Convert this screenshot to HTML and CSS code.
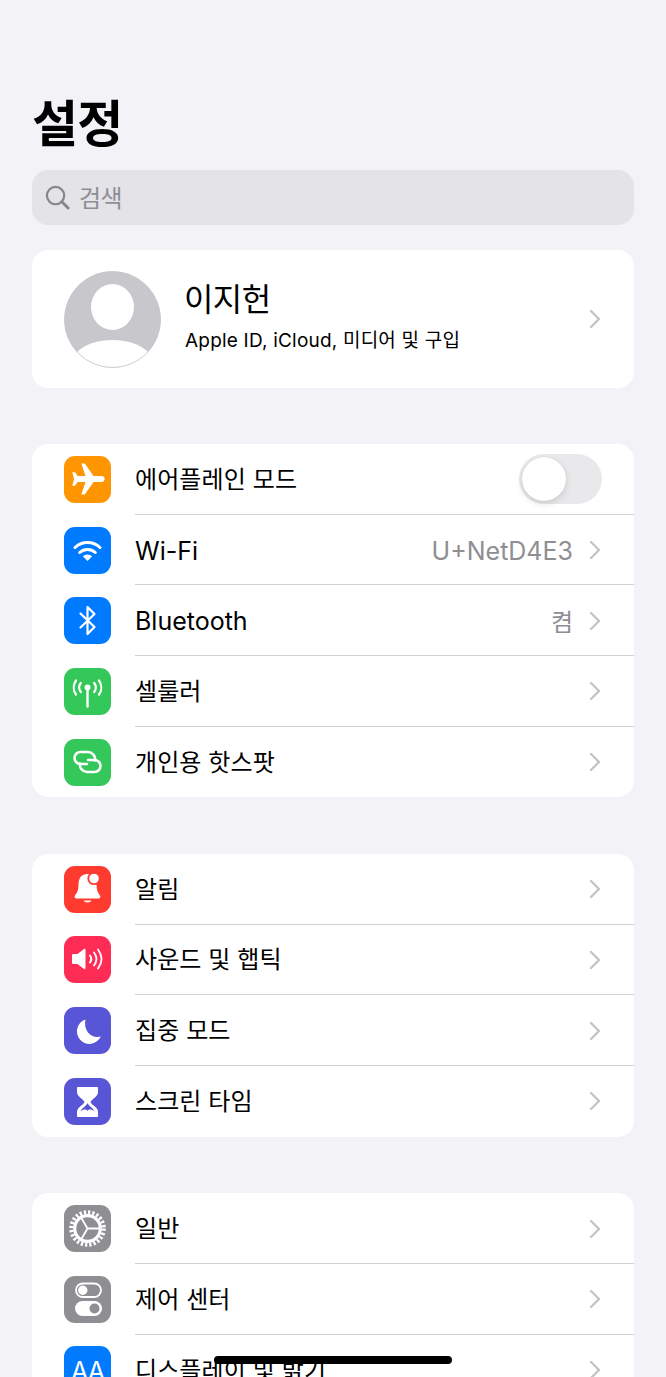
FILE: index.html
```html
<!DOCTYPE html>
<html lang="ko">
  <head>
    <meta charset="UTF-8" />
    <meta name="viewport" content="width=device-width, initial-scale=1.0" />
    <title>설정</title>
    <link rel="stylesheet" href="styles.css">
  </head>
  <body>
    <svg class="sprite" width="0" height="0">
      <symbol id="chev" viewBox="0 0 12 20">
        <path d="M2 2l8 8-8 8" fill="none" stroke="currentColor" stroke-width="2.4" stroke-linecap="round" stroke-linejoin="round" />
      </symbol>
    </svg>

    <h1 class="page-title">설정</h1>

    <div class="search">
      <svg class="search-icon" viewBox="0 0 26 26"><circle cx="11" cy="11" r="9" fill="none" stroke="currentColor" stroke-width="2.3" /><path d="M17.5 17.5l6.5 6.5" stroke="currentColor" stroke-width="3" stroke-linecap="round" /></svg>
      <span>검색</span>
    </div>

    <div class="card profile">
      <svg class="avatar" viewBox="0 0 97 97">
        <circle cx="48.5" cy="48.5" r="48.2" fill="#c7c7cc" />
        <ellipse cx="48.5" cy="36" rx="21.5" ry="23" fill="#fff" />
        <path d="M13 81c8-8 21-12 35.500-12s27.500 4 35.500 12c-9 10-22 15.500-35.500 15.500S22 91 13 81z" fill="#fff" />
        <circle cx="48.500" cy="48.500" r="48" fill="none" stroke="#c7c7cc" stroke-width="0.8" />
      </svg>
      <div class="profile-text">
        <div class="profile-name">이지헌</div>
        <div class="profile-sub">Apple ID, iCloud, 미디어 및 구입</div>
      </div>
      <svg class="chev"><use href="#chev" /></svg>
    </div>

    <div class="card group">
      <div class="row">
        <svg class="icon bg-orange" viewBox="0 0 47 47"><path fill="#fff" d="M37.500 20H29.500L20.800 7.500H17.300L21.500 20H13.700L10.900 16.300H8.300L10 23 8.300 29.700H10.900L13.700 26H21.500L17.300 38.500H20.800L29.500 26H37.500C41.800 26 41.800 20 37.500 20Z" /></svg>
        <div class="row-body">
          <span class="label">에어플레인 모드</span>
          <span class="toggle"><span class="knob"></span></span>
        </div>
      </div>
      <div class="row">
        <svg class="icon bg-blue" viewBox="0 0 47 47"><g fill="none" stroke="#fff" stroke-width="3" stroke-linecap="round"><path d="M11 20.500A18 18 0 0 1 36 20.500" /><path d="M15.700 25.500A11.500 11.500 0 0 1 31.300 25.500" /></g><path fill="#fff" d="M23.500 34L18.800 29.300A7 7 0 0 1 28.200 29.300Z" /></svg>
        <div class="row-body">
          <span class="label latin">Wi-Fi</span>
          <span class="value latin">U+NetD4E3</span>
          <svg class="chev"><use href="#chev" /></svg>
        </div>
      </div>
      <div class="row">
        <svg class="icon bg-blue" viewBox="0 0 47 47"><path fill="none" stroke="#fff" stroke-width="2.200" stroke-linejoin="round" stroke-linecap="round" d="M16.500 16.500L30.500 30 23.500 37V10L30.500 17 16.500 30.500" /></svg>
        <div class="row-body">
          <span class="label latin">Bluetooth</span>
          <span class="value">켬</span>
          <svg class="chev"><use href="#chev" /></svg>
        </div>
      </div>
      <div class="row">
        <svg class="icon bg-green" viewBox="0 0 47 47"><circle cx="23.500" cy="19.500" r="3" fill="#fff" /><path d="M23.500 20v18.500" stroke="#fff" stroke-width="2.400" stroke-linecap="round" /><g fill="none" stroke="#fff" stroke-width="2.200" stroke-linecap="round"><path d="M12 12.500A12 12 0 0 0 12 26.500" /><path d="M16.800 15A7.500 7.500 0 0 0 16.800 24" /><path d="M35 12.500A12 12 0 0 1 35 26.500" /><path d="M30.200 15A7.500 7.500 0 0 1 30.200 24" /></g></svg>
        <div class="row-body">
          <span class="label">셀룰러</span>
          <svg class="chev"><use href="#chev" /></svg>
        </div>
      </div>
      <div class="row">
        <svg class="icon bg-green" viewBox="0 0 47 47"><g fill="none" stroke="#fff" stroke-width="2.500" stroke-linecap="round"><path d="M31 21.500C32 17 28 13 24 13H16.500A6 6 0 0 0 16.500 25H23" /><path d="M16 24.500C15 29 19 33 23 33H30.500A6 6 0 0 0 30.500 21H24" /></g></svg>
        <div class="row-body last">
          <span class="label">개인용 핫스팟</span>
          <svg class="chev"><use href="#chev" /></svg>
        </div>
      </div>
    </div>

    <div class="card group">
      <div class="row">
        <svg class="icon bg-red" viewBox="0 0 47 47"><path fill="#fff" d="M23.500 8C16.500 8 14.500 13 14.500 19C14.500 24 13 27 11 29.500C10 31 11 32.500 12.500 32.500H34.500C36 32.500 37 31 36 29.500C34 27 32.500 24 32.500 19C32.500 13 30.500 8 23.500 8Z" /><path fill="#fff" d="M19.500 34.500H27.500A4.200 3 0 0 1 19.500 34.500Z" /><circle cx="30" cy="12.500" r="6.600" fill="#ff3b30" /><circle cx="30" cy="12.500" r="4.800" fill="#fff" /></svg>
        <div class="row-body">
          <span class="label">알림</span>
          <svg class="chev"><use href="#chev" /></svg>
        </div>
      </div>
      <div class="row">
        <svg class="icon bg-pink" viewBox="0 0 47 47"><path fill="#fff" d="M8 19.500C8 18.500 8.500 18 9.500 18H13.500L20 13C21 12.500 21.500 13 21.500 14V32C21.500 33 21 33.500 20 33L13.500 28H9.500C8.500 28 8 27.500 8 26.500Z" /><g fill="none" stroke="#fff" stroke-linecap="round"><path stroke-width="2" d="M26 19.500C27.500 21.500 27.500 24.500 26 26.500" /><path stroke-width="1.800" d="M30 16.500C33 20.500 33 25.500 30 29.500" /><path stroke-width="1.800" d="M34 13.500C38.500 19.500 38.500 26.500 34 32.500" /></g></svg>
        <div class="row-body">
          <span class="label">사운드 및 햅틱</span>
          <svg class="chev"><use href="#chev" /></svg>
        </div>
      </div>
      <div class="row">
        <svg class="icon bg-indigo" viewBox="0 0 47 47"><path fill="#fff" d="M21.500 12.500A12.500 12.500 0 1 0 36.800 29.500C28 32 19 24.500 21.500 12.500Z" /></svg>
        <div class="row-body">
          <span class="label">집중 모드</span>
          <svg class="chev"><use href="#chev" /></svg>
        </div>
      </div>
      <div class="row">
        <svg class="icon bg-indigo" viewBox="0 0 47 47"><path fill="#fff" d="M14 9H33C33.600 9 34 9.400 34 10V14C34 19 27.500 21 26.500 24C27.500 27 34 29 34 34V38C34 38.600 33.600 39 33 39H14C13.400 39 13 38.600 13 38V34C13 29 19.500 27 20.500 24C19.500 21 13 19 13 14V10C13 9.400 13.400 9 14 9Z" /><path fill="#5856d6" d="M23.500 25C24.500 28 29 29.500 30.500 33.500C27.500 31 25 31 23.500 33C22 31 19.500 31 16.500 33.500C18 29.500 22.500 28 23.500 25Z" /></svg>
        <div class="row-body last">
          <span class="label">스크린 타임</span>
          <svg class="chev"><use href="#chev" /></svg>
        </div>
      </div>
    </div>

    <div class="card group">
      <div class="row">
        <svg class="icon bg-gray" viewBox="0 0 47 47"><circle cx="23.500" cy="23.500" r="16.300" fill="none" stroke="#fff" stroke-width="4" stroke-dasharray="2.300 1.970" /><circle cx="23.500" cy="23.500" r="12.800" fill="none" stroke="#fff" stroke-width="3.200" /><path d="M23.500 23.500H36M23.500 23.500L17.250 12.700M23.500 23.500L17.250 34.300" stroke="#fff" stroke-width="1.800" /></svg>
        <div class="row-body">
          <span class="label">일반</span>
          <svg class="chev"><use href="#chev" /></svg>
        </div>
      </div>
      <div class="row">
        <svg class="icon bg-gray" viewBox="0 0 47 47"><rect x="12" y="7.500" width="25" height="13.500" rx="6.750" fill="none" stroke="#fff" stroke-width="1.800" /><circle cx="18.800" cy="14.300" r="4.700" fill="#fff" /><rect x="11" y="25" width="27" height="15" rx="7.500" fill="#fff" /><circle cx="30.500" cy="32.500" r="5" fill="#8e8e93" /></svg>
        <div class="row-body">
          <span class="label">제어 센터</span>
          <svg class="chev"><use href="#chev" /></svg>
        </div>
      </div>
      <div class="row">
        <div class="icon bg-blue icon-text">AA</div>
        <div class="row-body last">
          <span class="label">디스플레이 및 밝기</span>
          <svg class="chev"><use href="#chev" /></svg>
        </div>
      </div>
    </div>

    <div class="home-bar"></div>
  </body>
</html>
```

FILE: styles.css
```css
html,
body {
  height: 1377px;
  overflow: hidden;
}
body {
  margin: 0;
  padding: 0 32px;
  background: #f2f2f7;
  color: #000;
  font-family: "Noto Sans CJK KR", sans-serif;
}
.sprite {
  position: absolute;
}
.latin {
  font-family: Inter, "Noto Sans CJK KR", sans-serif;
}

.page-title {
  margin: 0;
  padding-top: 87px;
  height: 83px;
  font-size: 50px;
  line-height: 66px;
  font-weight: 700;
  letter-spacing: -0.800px;
}

.search {
  display: flex;
  align-items: center;
  height: 55px;
  padding-left: 13px;
  border-radius: 16px;
  background: #e3e3e8;
  color: #8e8e93;
  font-size: 24px;
  letter-spacing: -0.500px;
}
.search-icon {
  width: 25px;
  height: 25px;
  margin-right: 9px;
  color: #86868a;
}
.search span {
  padding-bottom: 2px;
}

.card {
  background: #fff;
  border-radius: 16px;
}
.chev {
  flex: none;
  width: 12px;
  height: 20px;
  color: #c4c4c7;
}

.profile {
  display: flex;
  align-items: center;
  height: 138px;
  margin-top: 25px;
  padding: 0 33px 0 32px;
}
.avatar {
  width: 97px;
  height: 97px;
  flex: none;
}
.profile-text {
  flex: 1;
  margin-left: 24px;
  margin-top: -6px;
}
.profile-name {
  margin-left: -1px;
  font-size: 32px;
  line-height: 40px;
  letter-spacing: -0.600px;
}
.profile-sub {
  margin-top: 9px;
  font-family: Inter, "Noto Sans CJK KR", sans-serif;
  font-size: 19px;
  line-height: 30px;
  letter-spacing: 0.200px;
}

.group {
  display: flex;
  flex-direction: column;
  margin-top: 56.500px;
  overflow: hidden;
}
.profile + .group {
  margin-top: 56px;
}
.row {
  display: flex;
  align-items: center;
  height: 70.700px;
  padding-left: 32px;
}
.icon {
  flex: none;
  width: 47px;
  height: 47px;
  border-radius: 11px;
}
.icon-text {
  display: flex;
  align-items: center;
  justify-content: center;
  padding-top: 3px;
  box-sizing: border-box;
  color: #fff;
  font-family: Inter, sans-serif;
  font-size: 25px;
  letter-spacing: -1px;
}
.bg-orange { background: #ff9500; }
.bg-blue { background: #007aff; }
.bg-green { background: #34c759; }
.bg-red { background: #ff3b30; }
.bg-pink { background: #ff2d55; }
.bg-indigo { background: #5856d6; }
.bg-gray { background: #8e8e93; }

.row-body {
  flex: 1;
  display: flex;
  align-items: center;
  align-self: stretch;
  margin-left: 24px;
  padding-right: 33px;
  border-bottom: 1px solid #d1d1d4;
}
.row-body.last {
  border-bottom: 0;
}
.row-body .chev {
  margin-top: 1px;
}
.row-body.last .chev {
  margin-top: 0;
}
.label {
  flex: 1;
  padding-bottom: 3px;
  font-size: 24px;
  letter-spacing: 0.100px;
}
.label.latin {
  padding: 2px 0 0;
  font-size: 25px;
  letter-spacing: 0;
}
.value {
  margin-right: 16px;
  font-size: 24px;
  color: #8e8e93;
}
.value.latin {
  padding-top: 2px;
  font-size: 25px;
}

.toggle {
  display: block;
  width: 83px;
  height: 50px;
  margin-right: -1px;
  padding: 3px;
  box-sizing: border-box;
  border-radius: 25px;
  background: #e9e9eb;
}
.knob {
  display: block;
  width: 44px;
  height: 44px;
  border-radius: 50%;
  background: #fff;
  box-shadow: 0 3px 7px rgba(0, 0, 0, 0.12), 0 0 1px rgba(0, 0, 0, 0.16);
}

.home-bar {
  position: absolute;
  left: 214px;
  top: 1356px;
  width: 238px;
  height: 8px;
  border-radius: 4px;
  background: #000;
}
```
